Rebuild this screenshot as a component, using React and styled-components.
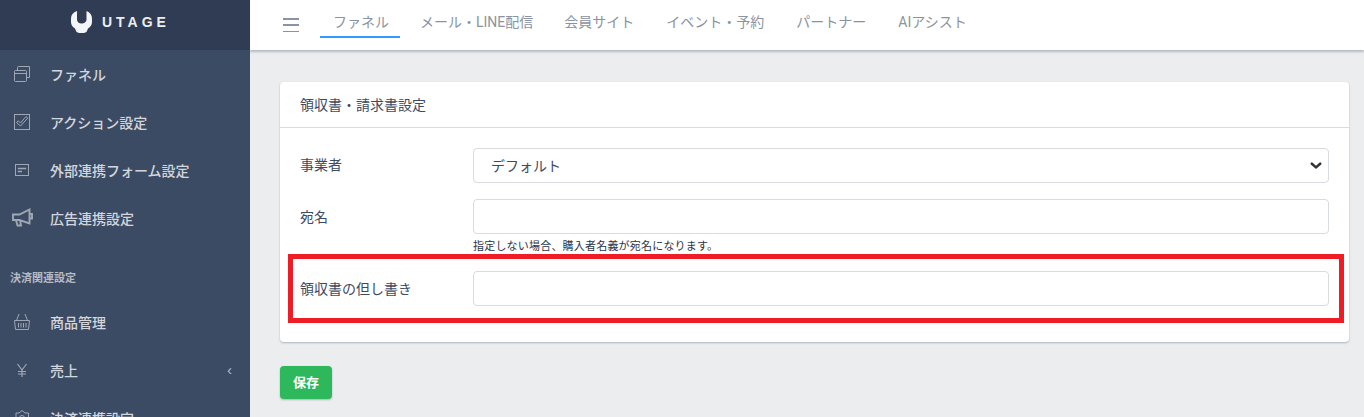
import React from "react";
import styled, { createGlobalStyle } from "styled-components";

const Global = createGlobalStyle`
  html, body { margin: 0; padding: 0; height: 100%; overflow: hidden; }
  body { font-family: "Noto Sans CJK JP", "Noto Sans", sans-serif; background: #ebedef; color: #3c4b64; }
  #root { height: 100%; }
  * { box-sizing: border-box; }
`;

const Shell = styled.div`display: flex; height: 417px; overflow: hidden;`;
const Sidebar = styled.aside`width: 250px; flex: none; background: #3c4b64; overflow: hidden;`;
const Brand = styled.div`
  height: 50px; background: #303c54; display: flex; align-items: center;
  gap: 10px; padding-left: 71px; padding-bottom: 6px;
`;
const BrandName = styled.span`
  font-family: "Liberation Sans", sans-serif; font-weight: 700; font-size: 14px; letter-spacing: 4px; color: #eceef0;
`;
const Menu = styled.nav`display: flex; flex-direction: column;`;
const Item = styled.div`
  height: 48px; display: flex; align-items: center; padding: 0 0 1px 13px; flex: none;
  color: #d3d6dc; font-size: 14px; font-weight: 500;
`;
const IconSlot = styled.span`
  width: 18px; height: 18px; margin-right: 19px; display: flex; align-items: center; justify-content: center;
  color: #9fa7b4; flex: none;
`;
const Caret = styled.span`margin-left: auto; margin-right: 18px; color: #b4bac4; font-size: 15px; font-family: "Liberation Sans", sans-serif;`;
const SectionTitle = styled.div`
  margin: 17px 0 3px; padding-left: 10px; height: 36px; display: flex; align-items: center;
  font-size: 11px; font-weight: 700; color: #b6bbc5;
`;
const Main = styled.div`flex: 1; min-width: 0; display: flex; flex-direction: column;`;
const TopBar = styled.header`
  height: 50px; background: #fff; display: flex; align-items: flex-start; flex: none;
  box-shadow: 0 2px 2px rgba(60,75,100,.3);
`;
const Burger = styled.button`
  border: 0; background: none; padding: 0; margin: 18px 0 0 33px; width: 16px; height: 14px; flex: none;
  display: flex; flex-direction: column; justify-content: space-between;
  & > i { display: block; height: 1.5px; background: #8a93a2; }
`;
const Tabs = styled.div`display: flex; margin-left: 21px; margin-top: 6px;`;
const Tab = styled.div`
  height: 32px; padding: 0 11px 0 13px; margin-right: 7px; font-size: 14px; line-height: 32px; color: #8a93a2; white-space: nowrap;
  font-family: "Roboto", "Noto Sans CJK JP", sans-serif;
  border-bottom: 2px solid ${p => (p.$active ? "#3399ff" : "transparent")};
  &:nth-child(n+3) { margin-right: 8px; }
`;
const Content = styled.main`padding: 32px 15px 0 30px;`;
const Card = styled.section`
  background: #fff; border-radius: 4px; box-shadow: 0 1px 2px rgba(60,75,100,.35); position: relative;
  height: 260px;
`;
const CardHead = styled.div`
  height: 46px; padding: 0 20px 2px; border-bottom: 1px solid #d8dbe0; display: flex; align-items: center;
  font-size: 14px; color: #3c4b64;
`;
const CardBody = styled.div`padding: 20px 20px 0;`;
const Row = styled.div`display: flex; align-items: flex-start; margin-bottom: ${p => p.$mb || 16}px;`;
const Label = styled.label`width: 173px; flex: none; font-size: 14px; line-height: ${p => p.$lh || 35}px; color: #3c4b64;`;
const Field = styled.div`flex: 1; min-width: 0;`;
const Input = styled.input`
  display: block; width: 100%; height: 35px; border: 1px solid #d8dbe0; border-radius: 4px; background: #fff; padding: 0 12px;
  outline: 0;
`;
const SelectBox = styled.div`
  height: 35px; border: 1px solid #d8dbe0; border-radius: 4px; display: flex; align-items: center; justify-content: space-between;
  padding: 0 5px 2px 17px; font-size: 14px; color: #3c4b64;
`;
const Help = styled.div`font-size: 11px; letter-spacing: .2px; line-height: 13px; margin-top: 5px; color: #2a3447;`;
const Highlight = styled.div`
  position: absolute; left: 8px; right: 5px; top: 172px; height: 69px; border: 5px solid #ee1c25; pointer-events: none;
`;
const Save = styled.button`
  margin-top: 24px; width: 52px; height: 33px; border: 0; border-radius: 4px; background: #2eb85c; color: #fff;
  font-family: inherit; font-size: 13px; font-weight: 700; box-shadow: 0 1px 2px rgba(60,75,100,.35); padding: 0 0 2px;
`;

const Svg = ({ children, w = 18, h = 18, vb = "0 0 18 18" }) => (
  <svg width={w} height={h} viewBox={vb} fill="none" stroke="currentColor" strokeWidth="1" style={{ flex: "none" }}>{children}</svg>
);
const Logo = () => (
  <svg width="21" height="22" viewBox="0 0 21 22" fill="#f4f5f6">
    <path d="M6 0 V8.500 C6 11 8 12.500 10.500 12.500 C13 12.500 15.500 11 15.500 8.500 V0 C19 1.500 21 4 21 7.500 V11 C21 14 19.500 16 17 17.500 L15.500 21 L13 22 H8 L5.500 21 L4 17.500 C1.500 16 0 14 0 11 V7.500 C0 4 2 1.500 6 0 Z" />
  </svg>
);
const Funnel = () => <Svg><rect x="1.500" y="5.500" width="12" height="11" rx="1"/><path d="M1.500 8.500h12M4.500 5.500v-3a1 1 0 0 1 1-1h11v11h-3"/></Svg>;
const Check = () => <Svg><rect x="1.500" y="1.500" width="15" height="15"/><path d="M3.500 9.500L5.300 7.800 7.500 10 13 3.500l1.800 1.500L7.500 13z"/></Svg>;
const FormIco = () => <Svg><rect x="2.500" y="3.500" width="13" height="11"/><path strokeWidth="1.300" d="M4.800 7.500h8.400M4.800 10.500h4.200"/></Svg>;
const Horn = () => <Svg w={22} h={20} vb="0 0 22 20"><path strokeWidth="1.900" d="M2 6.500h6.500L18.500 1.500v14L8.500 12H2zM5 12l1.500 5.500H10L9 12M18.500 6h2.500v4.500h-2.500"/></Svg>;
const Basket = () => <Svg><path d="M1.500 7.500h15l-1 9h-13zM3.500 7.500L6 1M14.500 7.500L12 1M5.500 10v4.500M8 10v4.500M10.500 10v4.500M13 10v4.500"/></Svg>;
const Yen = () => <Svg><path strokeWidth="1.200" d="M4.500 3L9 9l4.500-6M9 9v7M5 10.500h8M5 13h8"/></Svg>;
const Gear = () => <Svg><path d="M9 1.500l3 2.500h3.500v4l2 2-2 3v3.500H3v-3.500l-2-3 2-2V4h3z"/><circle cx="9" cy="9" r="2.500"/></Svg>;

const tabs = ["ファネル", "メール・LINE配信", "会員サイト", "イベント・予約", "パートナー", "AIアシスト"];

export default function App() {
  return (
    <Shell>
      <Global />
      <Sidebar>
        <Brand><Logo /><BrandName>UTAGE</BrandName></Brand>
        <Menu>
          <Item><IconSlot><Funnel /></IconSlot>ファネル</Item>
          <Item><IconSlot><Check /></IconSlot>アクション設定</Item>
          <Item><IconSlot><FormIco /></IconSlot>外部連携フォーム設定</Item>
          <Item><IconSlot><Horn /></IconSlot>広告連携設定</Item>
          <SectionTitle>決済関連設定</SectionTitle>
          <Item><IconSlot><Basket /></IconSlot>商品管理</Item>
          <Item><IconSlot><Yen /></IconSlot>売上<Caret>‹</Caret></Item>
          <Item><IconSlot><Gear /></IconSlot>決済連携設定</Item>
        </Menu>
      </Sidebar>
      <Main>
        <TopBar>
          <Burger aria-label="menu"><i /><i /><i /></Burger>
          <Tabs>
            {tabs.map((t, i) => <Tab key={t} $active={i === 0}>{t}</Tab>)}
          </Tabs>
        </TopBar>
        <Content>
          <Card>
            <CardHead>領収書・請求書設定</CardHead>
            <CardBody>
              <Row>
                <Label $lh={33}>事業者</Label>
                <Field>
                  <SelectBox>
                    デフォルト
                    <svg width="14" height="14" viewBox="0 0 14 14" fill="none" stroke="#333" strokeWidth="2.400"><path d="M2 5l5 4.500L12 5"/></svg>
                  </SelectBox>
                </Field>
              </Row>
              <Row $mb={19}>
                <Label>宛名</Label>
                <Field>
                  <Input />
                  <Help>指定しない場合、購入者名義が宛名になります。</Help>
                </Field>
              </Row>
              <Row>
                <Label>領収書の但し書き</Label>
                <Field><Input /></Field>
              </Row>
            </CardBody>
            <Highlight />
          </Card>
          <Save>保存</Save>
        </Content>
      </Main>
    </Shell>
  );
}
